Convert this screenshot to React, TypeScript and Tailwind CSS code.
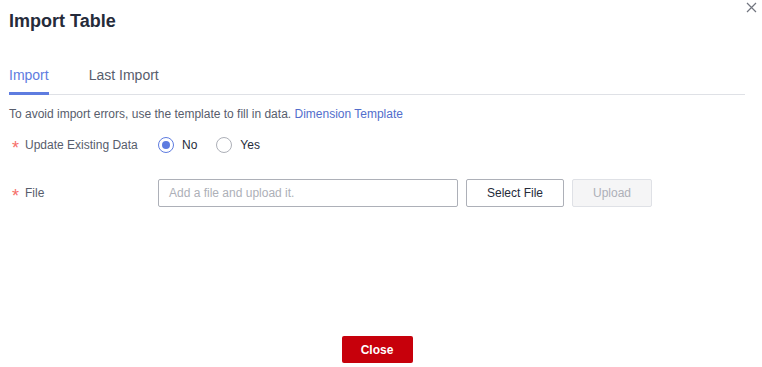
import React from "react";

export default function App() {
  return (
    <div className="relative w-[762px] h-[367px] bg-white text-[#252b3a]" style={{ fontFamily: '"Liberation Sans", Arial, sans-serif' }}>
      <button className="absolute left-[745px] top-[1px] w-[12px] h-[12px] flex items-center justify-center">
        <svg width="11" height="11" viewBox="0 0 11 11">
          <path d="M1 1L10 10M10 1L1 10" stroke="#71757f" strokeWidth="1.2" />
        </svg>
      </button>
      <div className="pl-[9px] pr-[17px] flex flex-col h-full">
        <div className="pt-[9px] text-[18px] leading-[24px] font-bold text-[#252b3a]">Import Table</div>
        <div className="mt-[32px] flex border-b border-[#dfe1e6]">
          <div className="relative pb-[9px] text-[14px] leading-[20px] text-[#5e7ce0]">
            Import
            <div className="absolute left-0 right-0 bottom-[-1px] h-[3px] bg-[#5e7ce0]" />
          </div>
          <div className="ml-[40px] pb-[9px] text-[14px] leading-[20px] text-[#575d6c]">Last Import</div>
        </div>
        <div className="mt-[11px] text-[12px] leading-[16px] text-[#575d6c]">
          To avoid import errors, use the template to fill in data. <span className="text-[#526ecc]">Dimension Template</span>
        </div>
        <div className="mt-[13px] flex items-center h-[20px]">
          <div className="w-[149px] flex items-center text-[12px] text-[#575d6c]">
            <span className="text-[#f66f6a] ml-[3px] mr-[6px] text-[18px] leading-none mt-[5px]">*</span>
            <span>Update Existing Data</span>
          </div>
          <label className="flex items-center">
            <span className="w-[16px] h-[16px] rounded-full border border-[#5e7ce0] flex items-center justify-center">
              <span className="w-[8px] h-[8px] rounded-full bg-[#5e7ce0]" />
            </span>
            <span className="ml-[8px] text-[12px] text-[#252b3a]">No</span>
          </label>
          <label className="flex items-center ml-[19px]">
            <span className="w-[16px] h-[16px] rounded-full border border-[#adb0b8]" />
            <span className="ml-[8px] text-[12px] text-[#252b3a]">Yes</span>
          </label>
        </div>
        <div className="mt-[24px] flex items-center">
          <div className="w-[149px] flex items-center text-[12px] text-[#575d6c]">
            <span className="text-[#f66f6a] ml-[3px] mr-[6px] text-[18px] leading-none mt-[5px]">*</span>
            <span>File</span>
          </div>
          <div className="w-[300px] h-[28px] border border-[#adb0b8] rounded-[2px] px-[10px] flex items-center text-[12px] text-[#adb0b8]">
            Add a file and upload it.
          </div>
          <button className="ml-[8px] w-[98px] h-[28px] border border-[#adb0b8] rounded-[2px] text-[12px] text-[#252b3a] bg-white">
            Select File
          </button>
          <button className="ml-[8px] w-[80px] h-[28px] border border-[#dfe1e6] rounded-[2px] text-[12px] text-[#adb0b8] bg-[#f5f5f6]">
            Upload
          </button>
        </div>
        <div className="flex-1" />
        <div className="flex justify-center pb-[4px]">
          <button className="w-[71px] h-[27px] rounded-[2px] bg-[#c7000b] text-white text-[12px] font-bold">Close</button>
        </div>
      </div>
    </div>
  );
}
